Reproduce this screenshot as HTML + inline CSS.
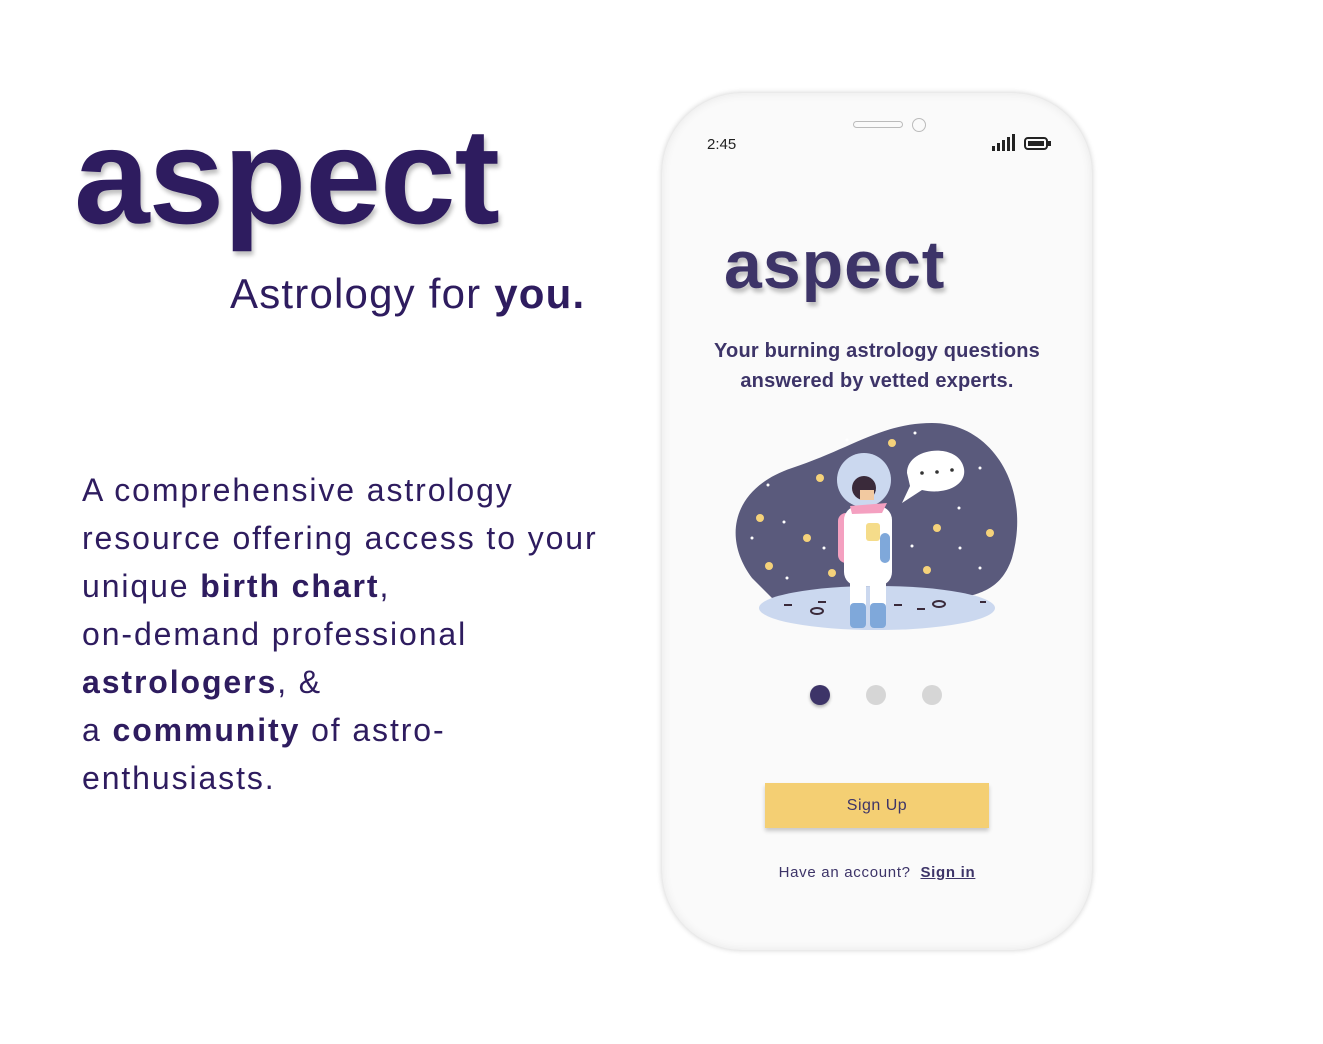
<!DOCTYPE html>
<html><head><style>
body{margin:0;width:1323px;height:1044px;background:#fff;position:relative;overflow:hidden;font-family:"Liberation Sans",sans-serif;color:#2e1c5f}
.logo{position:absolute;left:74px;top:98px;font-size:136px;font-weight:bold;letter-spacing:-1px;text-shadow:2px 4px 4px rgba(0,0,0,.25)}
.tag{position:absolute;left:230px;top:270px;font-size:42px;letter-spacing:1.2px}
.para{position:absolute;left:82px;top:466px;font-size:32px;line-height:48px;letter-spacing:1.9px}
.phone{position:absolute;left:662px;top:93px;width:430px;height:857px;border-radius:80px;background:#fafafa;box-shadow:0 0 6px rgba(0,0,0,.2),inset 0 0 10px rgba(0,0,0,.08)}
.p{position:absolute}
</style></head><body>
<div class="logo">aspect</div>
<div class="tag">Astrology for <b>you.</b></div>
<div class="para">A comprehensive astrology<br>resource offering access to your<br>unique <b>birth chart</b>,<br>on-demand professional<br><b>astrologers</b>, &amp;<br>a <b>community</b> of astro-<br>enthusiasts.</div>
<div class="phone">
<div class="p" style="left:191px;top:28px;width:48px;height:5px;border:1px solid #bbb;border-radius:4px"></div>
<div class="p" style="left:250px;top:25px;width:12px;height:12px;border:1px solid #bbb;border-radius:50%"></div>
<div class="p" style="left:45px;top:43px;font-size:15px;color:#222">2:45</div>
<svg class="p" style="left:328px;top:40px" width="64" height="22"><rect x="2" y="13" width="3" height="5" fill="#222"/><rect x="7" y="10" width="3" height="8" fill="#222"/><rect x="12" y="7" width="3" height="11" fill="#222"/><rect x="17" y="4" width="3" height="14" fill="#222"/><rect x="22" y="1" width="3" height="17" fill="#222"/><rect x="35" y="5" width="22" height="11" rx="3" fill="none" stroke="#222" stroke-width="2"/><rect x="38" y="8" width="16" height="5" fill="#222"/><rect x="58" y="8" width="3" height="5" fill="#222"/></svg>
<div class="p" style="left:62px;top:133px;font-size:68px;font-weight:bold;color:#3d3468;letter-spacing:1px;text-shadow:2px 4px 4px rgba(0,0,0,.25)">aspect</div>
<div class="p" style="left:0;width:430px;top:243px;text-align:center;font-size:20px;line-height:30px;color:#3d3468;font-weight:bold;letter-spacing:0.2px">Your burning astrology questions<br>answered by vetted experts.</div>
<svg class="p" style="left:70px;top:325px" width="290" height="215" viewBox="0 0 290 215">
<path d="M20 160 C-10 120 0 70 60 50 C120 30 150 5 200 5 C260 5 300 70 280 140 C270 170 250 175 230 180 L40 180 Z" fill="#5a5a7c"/>
<ellipse cx="145" cy="190" rx="118" ry="22" fill="#cbd8ef"/>
<path d="M175 55 C175 30 220 25 230 45 C240 65 215 78 190 72 L170 85 L178 68 Z" fill="#fff"/>
<circle cx="190" cy="55" r="1.8" fill="#333"/><circle cx="205" cy="54" r="1.8" fill="#333"/><circle cx="220" cy="52" r="1.8" fill="#333"/>
<circle cx="132" cy="62" r="27" fill="#cbd8ef"/>
<rect x="106" y="95" width="22" height="50" rx="8" fill="#f4a0c0"/>
<rect x="112" y="88" width="48" height="80" rx="14" fill="#fff"/>
<rect x="118" y="150" width="16" height="45" fill="#fff"/><rect x="138" y="150" width="16" height="45" fill="#fff"/>
<rect x="118" y="185" width="16" height="25" rx="4" fill="#7fa8da"/><rect x="138" y="185" width="16" height="25" rx="4" fill="#7fa8da"/>
<rect x="148" y="115" width="10" height="30" rx="5" fill="#7fa8da"/>
<rect x="134" y="105" width="14" height="18" rx="3" fill="#f5dc8a"/>
<circle cx="132" cy="70" r="12" fill="#3a2a3a"/><rect x="128" y="72" width="14" height="10" fill="#f2c9a0"/>
<path d="M118 88 L155 85 L150 95 L120 96 Z" fill="#f4a0c0"/>
<g fill="#f5d27a"><circle cx="88" cy="60" r="4"/><circle cx="160" cy="25" r="4"/><circle cx="28" cy="100" r="4"/><circle cx="75" cy="120" r="4"/><circle cx="37" cy="148" r="4"/><circle cx="100" cy="155" r="4"/><circle cx="205" cy="110" r="4"/><circle cx="258" cy="115" r="4"/><circle cx="195" cy="152" r="4"/></g>
<g fill="#fff"><circle cx="115" cy="22" r="1.5"/><circle cx="183" cy="15" r="1.5"/><circle cx="36" cy="67" r="1.5"/><circle cx="248" cy="50" r="1.5"/><circle cx="227" cy="90" r="1.5"/><circle cx="52" cy="104" r="1.5"/><circle cx="20" cy="120" r="1.5"/><circle cx="92" cy="130" r="1.5"/><circle cx="180" cy="128" r="1.5"/><circle cx="228" cy="130" r="1.5"/><circle cx="248" cy="150" r="1.5"/><circle cx="55" cy="160" r="1.5"/></g>
<g fill="#3a2a3a"><rect x="52" y="186" width="8" height="2"/><rect x="86" y="183" width="8" height="2"/><rect x="162" y="186" width="8" height="2"/><rect x="185" y="190" width="8" height="2"/><rect x="248" y="183" width="6" height="2"/><ellipse cx="85" cy="193" rx="6" ry="3" fill="none" stroke="#3a2a3a" stroke-width="2"/><ellipse cx="207" cy="186" rx="6" ry="3" fill="none" stroke="#3a2a3a" stroke-width="2"/></g>
</svg>
<div class="p" style="left:148px;top:592px;width:20px;height:20px;border-radius:50%;background:#3d3468;box-shadow:0 2px 3px rgba(0,0,0,.3)"></div>
<div class="p" style="left:204px;top:592px;width:20px;height:20px;border-radius:50%;background:#d6d6d6"></div>
<div class="p" style="left:260px;top:592px;width:20px;height:20px;border-radius:50%;background:#d6d6d6"></div>
<div class="p" style="left:103px;top:690px;width:224px;height:45px;background:#f4cf73;box-shadow:0 3px 4px rgba(0,0,0,.2);text-align:center;line-height:45px;font-size:16px;color:#3d3468;letter-spacing:0.5px">Sign Up</div>
<div class="p" style="left:0;width:430px;top:771px;text-align:center;font-size:15px;color:#3d3468;letter-spacing:0.7px">Have an account?&nbsp; <b style="text-decoration:underline">Sign in</b></div>
</div>
</body></html>
